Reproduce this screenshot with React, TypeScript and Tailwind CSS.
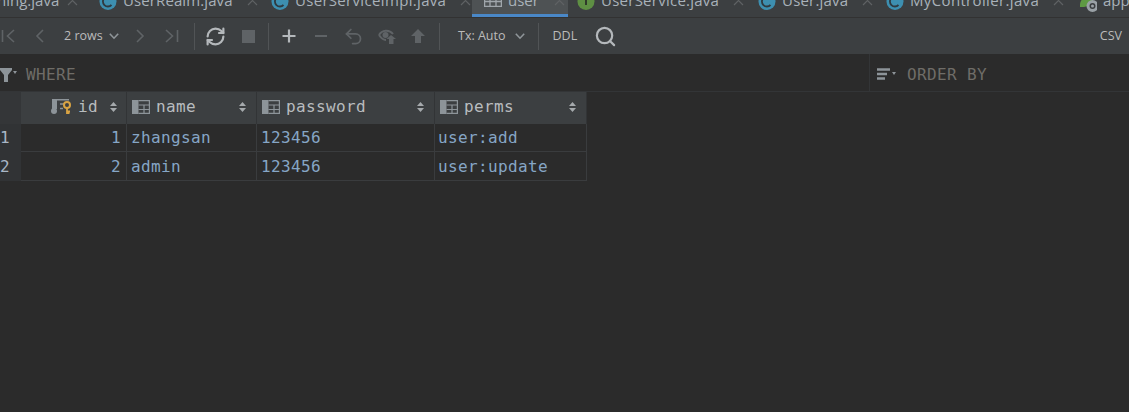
import { RefreshCw, Search, Undo2 } from "lucide-react";

const uiFont = "font-['Open_Sans','Noto_Sans',sans-serif]";
const mono = "font-['DejaVu_Sans_Mono',monospace] text-[16px] tracking-[0.37px]";

function CloseX() {
  return (
    <svg width="12" height="12" viewBox="0 0 12 12" className="shrink-0">
      <path d="M1 2 L10 11 M10 2 L1 11" stroke="#5f6264" strokeWidth="1.2" fill="none" />
    </svg>
  );
}

function ClassIcon() {
  return (
    <svg width="18" height="28" viewBox="0 0 18 28" className="shrink-0">
      <circle cx="9" cy="15.5" r="8.5" fill="#3d8fb0" />
      <path d="M12.5 12 A5 5 0 1 0 12.5 19" stroke="#2f3a40" strokeWidth="1.8" fill="none" />
    </svg>
  );
}

function InterfaceIcon() {
  return (
    <svg width="18" height="28" viewBox="0 0 18 28" className="shrink-0">
      <circle cx="9" cy="15.5" r="8.5" fill="#5e8f43" />
      <rect x="8" y="8" width="2" height="11" fill="#2f3a2a" />
    </svg>
  );
}

function TableIcon() {
  return (
    <svg width="18" height="14" viewBox="0 0 18 14" className="shrink-0">
      <path
        d="M0.6 0 V13.4 H17.4 V0 M0.6 4 H17.4 M0.6 8.5 H17.4 M6 0 V13.4 M12 0 V13.4"
        stroke="#a0a6ab"
        strokeWidth="1.3"
        fill="none"
      />
    </svg>
  );
}

function SpringIcon() {
  return (
    <svg width="24" height="28" viewBox="0 0 24 28" className="shrink-0">
      <path d="M7 19 C7 12 14 10 20 10 C20 15 17 22 7 21 Z" fill="#5e9a43" />
      <circle cx="19.5" cy="20" r="6" fill="#9aa1a6" />
      <circle cx="19.5" cy="20" r="3" fill="#3c3f41" />
      <circle cx="19.5" cy="20" r="1.5" fill="#9aa1a6" />
    </svg>
  );
}

type Tab = {
  label: string;
  icon?: React.ReactNode;
  box: string;
  inner: string;
  text: string;
  closeGap: string;
  active?: boolean;
};

const tabs: Tab[] = [
  { label: "ning.java", box: "w-[90px]", inner: "-ml-[3px]", text: "", closeGap: "ml-[8px]" },
  { label: "UserRealm.java", icon: <ClassIcon />, box: "w-[172px] pl-[9px]", inner: "gap-[6px]", text: "tracking-[0.1px]", closeGap: "ml-[8px]" },
  { label: "UserServiceImpl.java", icon: <ClassIcon />, box: "w-[210px] pl-[9px]", inner: "gap-[6px]", text: "tracking-[0.3px]", closeGap: "ml-[8px]" },
  { label: "user", icon: <TableIcon />, box: "w-[96px] pl-[12px] bg-[#4e5254]", inner: "gap-[6px]", text: "", closeGap: "ml-[9px]", active: true },
  { label: "UserService.java", icon: <InterfaceIcon />, box: "w-[181px] pl-[9px]", inner: "gap-[6px]", text: "tracking-[0.25px]", closeGap: "ml-[8px]" },
  { label: "User.java", icon: <ClassIcon />, box: "w-[128px] pl-[9px]", inner: "gap-[6px]", text: "tracking-[0.2px]", closeGap: "ml-[8px]" },
  { label: "MyController.java", icon: <ClassIcon />, box: "w-[191px] pl-[9px]", inner: "gap-[6px]", text: "tracking-[0.35px]", closeGap: "ml-[8px]" },
];

function TabItem({ tab }: { tab: Tab }) {
  return (
    <div className={`relative flex h-[17px] shrink-0 items-start overflow-hidden ${tab.box}`}>
      <div className={`mt-[-14px] flex h-[28px] items-center ${tab.inner}`}>
        {tab.icon}
        <span className={`whitespace-nowrap text-[15px] leading-[28px] text-[#a9b2ba] ${tab.text}`}>{tab.label}</span>
        <span className={tab.closeGap}>
          <CloseX />
        </span>
      </div>
      {tab.active && <div className="absolute bottom-0 left-0 right-0 h-[3px] bg-[#4a88c7]" />}
    </div>
  );
}

function Sep() {
  return <div className="h-[27px] w-px shrink-0 bg-[#515456]" />;
}

function ToolIcon({ d, width = 16, stroke = "#5f6366", sw = 1.6, className = "" }: { d: string; width?: number; stroke?: string; sw?: number; className?: string }) {
  return (
    <svg width={width} height="16" viewBox={`0 0 ${width} 16`} className={`shrink-0 ${className}`}>
      <path d={d} stroke={stroke} strokeWidth={sw} fill="none" />
    </svg>
  );
}

function Chevron({ color = "#8f9599" }: { color?: string }) {
  return (
    <svg width="10" height="7" viewBox="0 0 10 7" className="shrink-0">
      <path d="M0.8 0.8 L5 5.2 L9.2 0.8" stroke={color} strokeWidth="1.6" fill="none" />
    </svg>
  );
}

function Toolbar() {
  return (
    <div className={`flex h-[36px] items-center bg-[#3c3f41] ${uiFont}`}>
      <ToolIcon d="M1.5 2 V14 M13 2 L6.5 8 L13 14" width={14} className="ml-[1px]" />
      <ToolIcon d="M8 2 L2 8 L8 14" width={10} className="ml-[20px]" />
      <div className="ml-[19px] flex w-[55px] items-center justify-between">
        <span className="whitespace-nowrap text-[12.5px] text-[#bbbbbb]">2 rows</span>
        <Chevron />
      </div>
      <ToolIcon d="M2 2 L8 8 L2 14" width={10} className="ml-[16px]" />
      <ToolIcon d="M1 2 L7.5 8 L1 14 M12.5 2 V14" width={14} className="ml-[20px]" />
      <div className="ml-[15px]">
        <Sep />
      </div>
      <RefreshCw size={21} strokeWidth={2.5} color="#b4b8bb" className="ml-[10px] shrink-0" />
      <div className="ml-[16px] h-[13px] w-[13px] shrink-0 bg-[#5f6366]" />
      <div className="ml-[13px]">
        <Sep />
      </div>
      <ToolIcon d="M8 1.5 V14.5 M1.5 8 H14.5" stroke="#b4b8bb" sw={2.2} className="ml-[12px]" />
      <ToolIcon d="M2 8 H14" sw={2} className="ml-[16px]" />
      <Undo2 size={21} strokeWidth={2} color="#5f6366" className="ml-[14px] shrink-0" />
      <svg width="18" height="16" viewBox="0 0 18 16" className="ml-[14px] shrink-0">
        <path d="M1 7 C4 2 11 1 15 6" stroke="#5f6366" strokeWidth="2" fill="none" />
        <path d="M1 7 C3 10 5 12 8 12" stroke="#5f6366" strokeWidth="2" fill="none" />
        <circle cx="7.5" cy="7" r="3" fill="#5f6366" />
        <path d="M13 7 L18 11 H15.5 V16 H11 V11 H8.5 Z" fill="#5f6366" />
      </svg>
      <svg width="16" height="16" viewBox="0 0 16 16" className="ml-[14px] shrink-0">
        <path d="M8 1 L15 8 H11 V15 H5 V8 H1 Z" fill="#5f6366" />
      </svg>
      <div className="ml-[13px]">
        <Sep />
      </div>
      <span className="ml-[18px] whitespace-nowrap text-[12.5px] text-[#bbbbbb]">Tx: Auto</span>
      <div className="ml-[9px]">
        <Chevron />
      </div>
      <div className="ml-[13px]">
        <Sep />
      </div>
      <span className="ml-[14px] text-[12.5px] text-[#bbbbbb]">DDL</span>
      <Search size={23} strokeWidth={2.3} color="#b4b8bb" className="ml-[17px] shrink-0" />
      <span className="ml-auto mr-[7px] text-[12.5px] text-[#bbbbbb]">CSV</span>
    </div>
  );
}

function FilterBar() {
  return (
    <div className={`flex h-[38px] items-center border-b border-[#333537] bg-[#2b2b2b] ${mono}`}>
      <div className="flex h-full w-[869px] items-center pt-[4px]">
        <svg width="17" height="14" viewBox="0 0 17 14" className="shrink-0">
          <path d="M0 0 H12 V2 L8 7 V14 H4 V7 L0 2 Z" fill="#8d9499" />
          <path d="M13 3 H17 L15 6 Z" fill="#8d9499" />
        </svg>
        <span className="ml-[9px] text-[#6f6d68]">WHERE</span>
      </div>
      <div className="flex h-full items-center border-l border-[#333537] pl-[7px] pt-[4px]">
        <svg width="19" height="14" viewBox="0 0 19 14" className="shrink-0">
          <path d="M0 1.5 H13 M0 6 H10 M0 10.5 H8" stroke="#8d9499" strokeWidth="2.4" fill="none" />
          <path d="M15 4 H19 L17 7 Z" fill="#8d9499" />
        </svg>
        <span className="ml-[11px] text-[#6f6d68]">ORDER BY</span>
      </div>
    </div>
  );
}

function ColumnIcon() {
  return (
    <svg width="18" height="14" viewBox="0 0 18 14" className="shrink-0">
      <rect x="0" y="0" width="6.5" height="14" fill="#8d9499" />
      <path d="M6.5 0.6 H17.4 V13.4 H6.5 M6.5 5 H17.4 M6.5 9.5 H17.4 M12 5 V13.4" stroke="#8d9499" strokeWidth="1.2" fill="none" />
    </svg>
  );
}

function KeyColumnIcon() {
  return (
    <svg width="21" height="15" viewBox="0 0 21 15" className="shrink-0">
      <rect x="1" y="0" width="5" height="10" fill="#8d9499" />
      <circle cx="3" cy="12" r="3" fill="#8d9499" />
      <path d="M6 0.7 H18 M9 5 H13 M9 9.5 H12" stroke="#8d9499" strokeWidth="1.4" fill="none" />
      <circle cx="16" cy="6" r="3" stroke="#d9a343" strokeWidth="2" fill="none" />
      <path d="M16 9 V15 M16 12.5 H19 M16 14.5 H18.5" stroke="#d9a343" strokeWidth="1.8" fill="none" />
    </svg>
  );
}

function SortIcon() {
  return (
    <svg width="7" height="10" viewBox="0 0 7 10" className="shrink-0">
      <path d="M3.5 0 L7 4 H0 Z M3.5 10 L7 6 H0 Z" fill="#a5a9ac" />
    </svg>
  );
}

function HeaderCell({ name, icon, align }: { name: string; icon: React.ReactNode; align?: boolean }) {
  return (
    <div className={`flex h-[32px] items-center border-r border-[#323436] bg-[#3c3f41] pb-[3px] pl-[5px] ${align ? "pr-[9px]" : "pr-[10px]"}`}>
      {align ? (
        <div className="ml-auto flex items-center gap-[6px]">
          {icon}
          <span className="text-[#b8bcbf]">{name}</span>
          <span className="ml-[6px]">
            <SortIcon />
          </span>
        </div>
      ) : (
        <>
          {icon}
          <span className="ml-[6px] text-[#b8bcbf]">{name}</span>
          <span className="ml-auto">
            <SortIcon />
          </span>
        </>
      )}
    </div>
  );
}

const rows = [
  { n: 1, id: 1, name: "zhangsan", password: "123456", perms: "user:add", h: "h-[28px]" },
  { n: 2, id: 2, name: "admin", password: "123456", perms: "user:update", h: "h-[29px] pt-[1px]" },
];

function DataTable() {
  return (
    <div className={`grid w-[587px] grid-cols-[21px_106px_130px_178px_152px] ${mono}`}>
      <div className="h-[32px] bg-[#343638]" />
      <HeaderCell name="id" icon={<KeyColumnIcon />} align />
      <HeaderCell name="name" icon={<ColumnIcon />} />
      <HeaderCell name="password" icon={<ColumnIcon />} />
      <HeaderCell name="perms" icon={<ColumnIcon />} />
      {rows.map((r) => {
        const cell = `flex ${r.h} items-center border-b border-r border-[#3a3c3e] text-[#86a6c6]`;
        return (
          <div key={r.n} className="contents">
            <div className={`flex ${r.h} items-center bg-[#313335] text-[#a9b7c6]`}>{r.n}</div>
            <div className={`${cell} justify-end pr-[5px]`}>{r.id}</div>
            <div className={`${cell} pl-[4px]`}>{r.name}</div>
            <div className={`${cell} pl-[4px]`}>{r.password}</div>
            <div className={`${cell} pl-[3px]`}>{r.perms}</div>
          </div>
        );
      })}
    </div>
  );
}

export default function App() {
  return (
    <div className="flex h-[412px] w-[1129px] flex-col overflow-hidden bg-[#2b2b2b]">
      <div className={`flex h-[18px] shrink-0 overflow-hidden border-b border-[#323232] bg-[#3c3f41] ${uiFont}`}>
        <div className="flex shrink-0">
          {tabs.map((t) => (
            <TabItem key={t.label} tab={t} />
          ))}
        </div>
        <div className="flex h-[17px] items-start overflow-hidden pl-[5px]">
          <div className="mt-[-14px] flex h-[28px] items-center gap-[6px]">
            <SpringIcon />
            <span className="whitespace-nowrap text-[15px] leading-[28px] text-[#a9b2ba]">application.yml</span>
          </div>
        </div>
      </div>
      <Toolbar />
      <FilterBar />
      <DataTable />
    </div>
  );
}
